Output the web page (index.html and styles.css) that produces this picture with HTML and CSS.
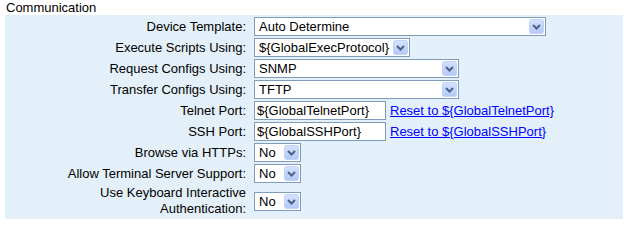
FILE: index.html
```html
<!DOCTYPE html>
<html>
<head>
<meta charset="utf-8">
<link rel="stylesheet" href="styles.css">
</head>
<body>
<div class="page">
  <div class="heading">Communication</div>
  <div class="panel">
    <div class="label">Device Template:</div>
    <div class="ctrl"><div class="sel w-device"><span class="val">Auto Determine</span><svg class="btn" width="15" height="15" viewBox="0 0 15 15"><defs><linearGradient id="g1" x1="0" y1="0" x2="0" y2="1"><stop offset="0" stop-color="#d5e2fe"/><stop offset="1" stop-color="#b3c8f8"/></linearGradient></defs><rect x="0.5" y="0.5" width="14" height="14" rx="2" fill="url(#g1)" stroke="#c0d2f7"/><polyline points="4,6 7.5,9.5 11,6" fill="none" stroke="#4d6185" stroke-width="2"/></svg></div></div>

    <div class="label">Execute Scripts Using:</div>
    <div class="ctrl"><div class="sel w-auto"><span class="val">${GlobalExecProtocol}</span><svg class="btn" width="15" height="15" viewBox="0 0 15 15"><rect x="0.5" y="0.5" width="14" height="14" rx="2" fill="url(#g1)" stroke="#c0d2f7"/><polyline points="4,6 7.5,9.5 11,6" fill="none" stroke="#4d6185" stroke-width="2"/></svg></div></div>

    <div class="label">Request Configs Using:</div>
    <div class="ctrl"><div class="sel w-req"><span class="val">SNMP</span><svg class="btn" width="15" height="15" viewBox="0 0 15 15"><rect x="0.5" y="0.5" width="14" height="14" rx="2" fill="url(#g1)" stroke="#c0d2f7"/><polyline points="4,6 7.5,9.5 11,6" fill="none" stroke="#4d6185" stroke-width="2"/></svg></div></div>

    <div class="label">Transfer Configs Using:</div>
    <div class="ctrl"><div class="sel w-req"><span class="val">TFTP</span><svg class="btn" width="15" height="15" viewBox="0 0 15 15"><rect x="0.5" y="0.5" width="14" height="14" rx="2" fill="url(#g1)" stroke="#c0d2f7"/><polyline points="4,6 7.5,9.5 11,6" fill="none" stroke="#4d6185" stroke-width="2"/></svg></div></div>

    <div class="label">Telnet Port:</div>
    <div class="ctrl"><div class="inp">${GlobalTelnetPort}</div><a class="link" href="#">Reset to ${GlobalTelnetPort}</a></div>

    <div class="label">SSH Port:</div>
    <div class="ctrl"><div class="inp">${GlobalSSHPort}</div><a class="link" href="#">Reset to ${GlobalSSHPort}</a></div>

    <div class="label">Browse via HTTPs:</div>
    <div class="ctrl"><div class="sel w-no"><span class="val">No</span><svg class="btn" width="15" height="15" viewBox="0 0 15 15"><rect x="0.5" y="0.5" width="14" height="14" rx="2" fill="url(#g1)" stroke="#c0d2f7"/><polyline points="4,6 7.5,9.5 11,6" fill="none" stroke="#4d6185" stroke-width="2"/></svg></div></div>

    <div class="label">Allow Terminal Server Support:</div>
    <div class="ctrl"><div class="sel w-no"><span class="val">No</span><svg class="btn" width="15" height="15" viewBox="0 0 15 15"><rect x="0.5" y="0.5" width="14" height="14" rx="2" fill="url(#g1)" stroke="#c0d2f7"/><polyline points="4,6 7.5,9.5 11,6" fill="none" stroke="#4d6185" stroke-width="2"/></svg></div></div>

    <div class="label two">Use Keyboard Interactive Authentication:</div>
    <div class="ctrl"><div class="sel w-no"><span class="val">No</span><svg class="btn" width="15" height="15" viewBox="0 0 15 15"><rect x="0.5" y="0.5" width="14" height="14" rx="2" fill="url(#g1)" stroke="#c0d2f7"/><polyline points="4,6 7.5,9.5 11,6" fill="none" stroke="#4d6185" stroke-width="2"/></svg></div></div>
  </div>
</div>
</body>
</html>
```

FILE: styles.css
```css
html, body {
  margin: 0;
  padding: 0;
  background: #ffffff;
}

body {
  font-family: "Liberation Sans", Arial, sans-serif;
  font-size: 13px;
  color: #000000;
}

.page {
  padding: 0 1px 0 5px;
  width: 624px;
  box-sizing: border-box;
}

.heading {
  line-height: 15px;
  height: 15px;
  padding-left: 1px;
}

.panel {
  background: #e4f0f9;
  display: grid;
  grid-template-columns: 241px 1fr;
  column-gap: 8px;
  row-gap: 2px;
  padding: 2px 0 2px 0;
  align-items: center;
}

.label {
  text-align: right;
  line-height: 16px;
  white-space: nowrap;
}

.label.two {
  white-space: normal;
  padding-left: 80px;
}

.ctrl {
  display: flex;
  align-items: center;
  gap: 4px;
  height: 19px;
}

.sel {
  display: flex;
  align-items: center;
  justify-content: space-between;
  gap: 4px;
  box-sizing: border-box;
  height: 19px;
  border: 1px solid #7f9db9;
  background: #ffffff;
  padding: 0 1px 0 4px;
}

.val {
  line-height: 17px;
  white-space: nowrap;
}

.btn {
  display: block;
  flex: none;
}

.w-device { width: 292px; }
.w-auto { width: auto; }
.w-req { width: 205px; }
.w-no { width: 47px; }

.inp {
  box-sizing: border-box;
  width: 132px;
  height: 19px;
  border: 1px solid #7f9db9;
  background: #ffffff;
  padding: 0 2px;
  line-height: 17px;
  white-space: nowrap;
}

.link {
  color: #0000ff;
  text-decoration: underline;
  line-height: 17px;
  white-space: nowrap;
}
```
